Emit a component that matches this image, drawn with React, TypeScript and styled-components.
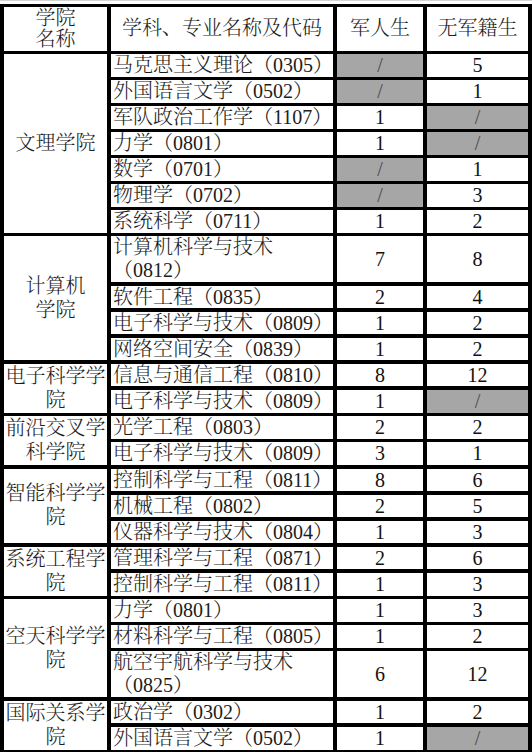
import { Fragment } from "react";
import styled, { createGlobalStyle } from "styled-components";

const GlobalStyle = createGlobalStyle`
  body {
    margin: 0;
    background: #fff;
  }
`;

const Page = styled.div`
  width: 532px;
  border-top: 1px solid #d4d4d4;
  padding-top: 2.5px;
  background: #fff;
`;

const Sheet = styled.div`
  display: grid;
  grid-template-columns: 103px 222px 86px 101px;
  grid-template-rows: 43.5px;
  grid-auto-rows: minmax(22.5px, auto);
  column-gap: 4px;
  row-gap: 3.5px;
  padding: 3.5px 4px;
  box-sizing: border-box;
  width: 532px;
  background: #000;
  font-family: "Liberation Serif", "Noto Serif CJK SC", "Noto Sans CJK SC", serif;
  font-size: 20px;
  font-weight: 300;
  color: #1c1c1c;
`;

const Cell = styled.div`
  display: flex;
  align-items: center;
  justify-content: center;
  background: #fff;
  line-height: 22.5px;
  white-space: nowrap;
  overflow: hidden;
`;

const HeadCell = styled(Cell)`
  text-align: center;
  line-height: 21px;
`;

const CollegeCell = styled(Cell)<{ $span: number }>`
  grid-column: 1;
  grid-row: span ${(p) => p.$span};
  text-align: center;
  line-height: 24px;
  white-space: normal;
  word-break: break-all;
  padding: 0 0 1px;
`;

const SubjectCell = styled(Cell)<{ $tall?: boolean }>`
  grid-column: 2;
  justify-content: flex-start;
  padding-left: 2px;
  line-height: ${(p) => (p.$tall ? "23px" : "22.5px")};
`;

const NumCell = styled(Cell)<{ $empty?: boolean }>`
  background: ${(p) => (p.$empty ? "#a6a6a6" : "#fff")};
  color: ${(p) => (p.$empty ? "#4a4a4a" : "#111")};
`;

type Row = { name: string; code: string; tall?: boolean; mil: string; civ: string };
type College = { name: string; rows: Row[] };

const colleges: College[] = [
  {
    name: "文理学院",
    rows: [
      { name: "马克思主义理论", code: "0305", mil: "/", civ: "5" },
      { name: "外国语言文学", code: "0502", mil: "/", civ: "1" },
      { name: "军队政治工作学", code: "1107", mil: "1", civ: "/" },
      { name: "力学", code: "0801", mil: "1", civ: "/" },
      { name: "数学", code: "0701", mil: "/", civ: "1" },
      { name: "物理学", code: "0702", mil: "/", civ: "3" },
      { name: "系统科学", code: "0711", mil: "1", civ: "2" },
    ],
  },
  {
    name: "计算机\n学院",
    rows: [
      { name: "计算机科学与技术", code: "0812", tall: true, mil: "7", civ: "8" },
      { name: "软件工程", code: "0835", mil: "2", civ: "4" },
      { name: "电子科学与技术", code: "0809", mil: "1", civ: "2" },
      { name: "网络空间安全", code: "0839", mil: "1", civ: "2" },
    ],
  },
  {
    name: "电子科学学院",
    rows: [
      { name: "信息与通信工程", code: "0810", mil: "8", civ: "12" },
      { name: "电子科学与技术", code: "0809", mil: "1", civ: "/" },
    ],
  },
  {
    name: "前沿交叉学科学院",
    rows: [
      { name: "光学工程", code: "0803", mil: "2", civ: "2" },
      { name: "电子科学与技术", code: "0809", mil: "3", civ: "1" },
    ],
  },
  {
    name: "智能科学学院",
    rows: [
      { name: "控制科学与工程", code: "0811", mil: "8", civ: "6" },
      { name: "机械工程", code: "0802", mil: "2", civ: "5" },
      { name: "仪器科学与技术", code: "0804", mil: "1", civ: "3" },
    ],
  },
  {
    name: "系统工程学院",
    rows: [
      { name: "管理科学与工程", code: "0871", mil: "2", civ: "6" },
      { name: "控制科学与工程", code: "0811", mil: "1", civ: "3" },
    ],
  },
  {
    name: "空天科学学院",
    rows: [
      { name: "力学", code: "0801", mil: "1", civ: "3" },
      { name: "材料科学与工程", code: "0805", mil: "1", civ: "2" },
      { name: "航空宇航科学与技术", code: "0825", tall: true, mil: "6", civ: "12" },
    ],
  },
  {
    name: "国际关系学院",
    rows: [
      { name: "政治学", code: "0302", mil: "1", civ: "2" },
      { name: "外国语言文学", code: "0502", mil: "1", civ: "/" },
    ],
  },
];

const Lines = ({ text }: { text: string }) => (
  <span>
    {text.split("\n").map((part, i) => (
      <Fragment key={i}>
        {i > 0 && <br />}
        {part}
      </Fragment>
    ))}
  </span>
);

const App = () => {
  return (
    <Page>
      <GlobalStyle />
      <Sheet>
        <HeadCell>
          <Lines text={"学院\n名称"} />
        </HeadCell>
        <HeadCell>学科、专业名称及代码</HeadCell>
        <HeadCell>军人生</HeadCell>
        <HeadCell>无军籍生</HeadCell>
        {colleges.map((college) => (
          <Fragment key={college.name}>
            <CollegeCell $span={college.rows.length}>
              <Lines text={college.name} />
            </CollegeCell>
            {college.rows.map((row, i) => (
              <Fragment key={i}>
                <SubjectCell $tall={row.tall}>
                  <span>
                    {row.name}
                    {row.tall && <br />}（{row.code}）
                  </span>
                </SubjectCell>
                <NumCell $empty={row.mil === "/"}>{row.mil}</NumCell>
                <NumCell $empty={row.civ === "/"}>{row.civ}</NumCell>
              </Fragment>
            ))}
          </Fragment>
        ))}
      </Sheet>
    </Page>
  );
};

export default App;
